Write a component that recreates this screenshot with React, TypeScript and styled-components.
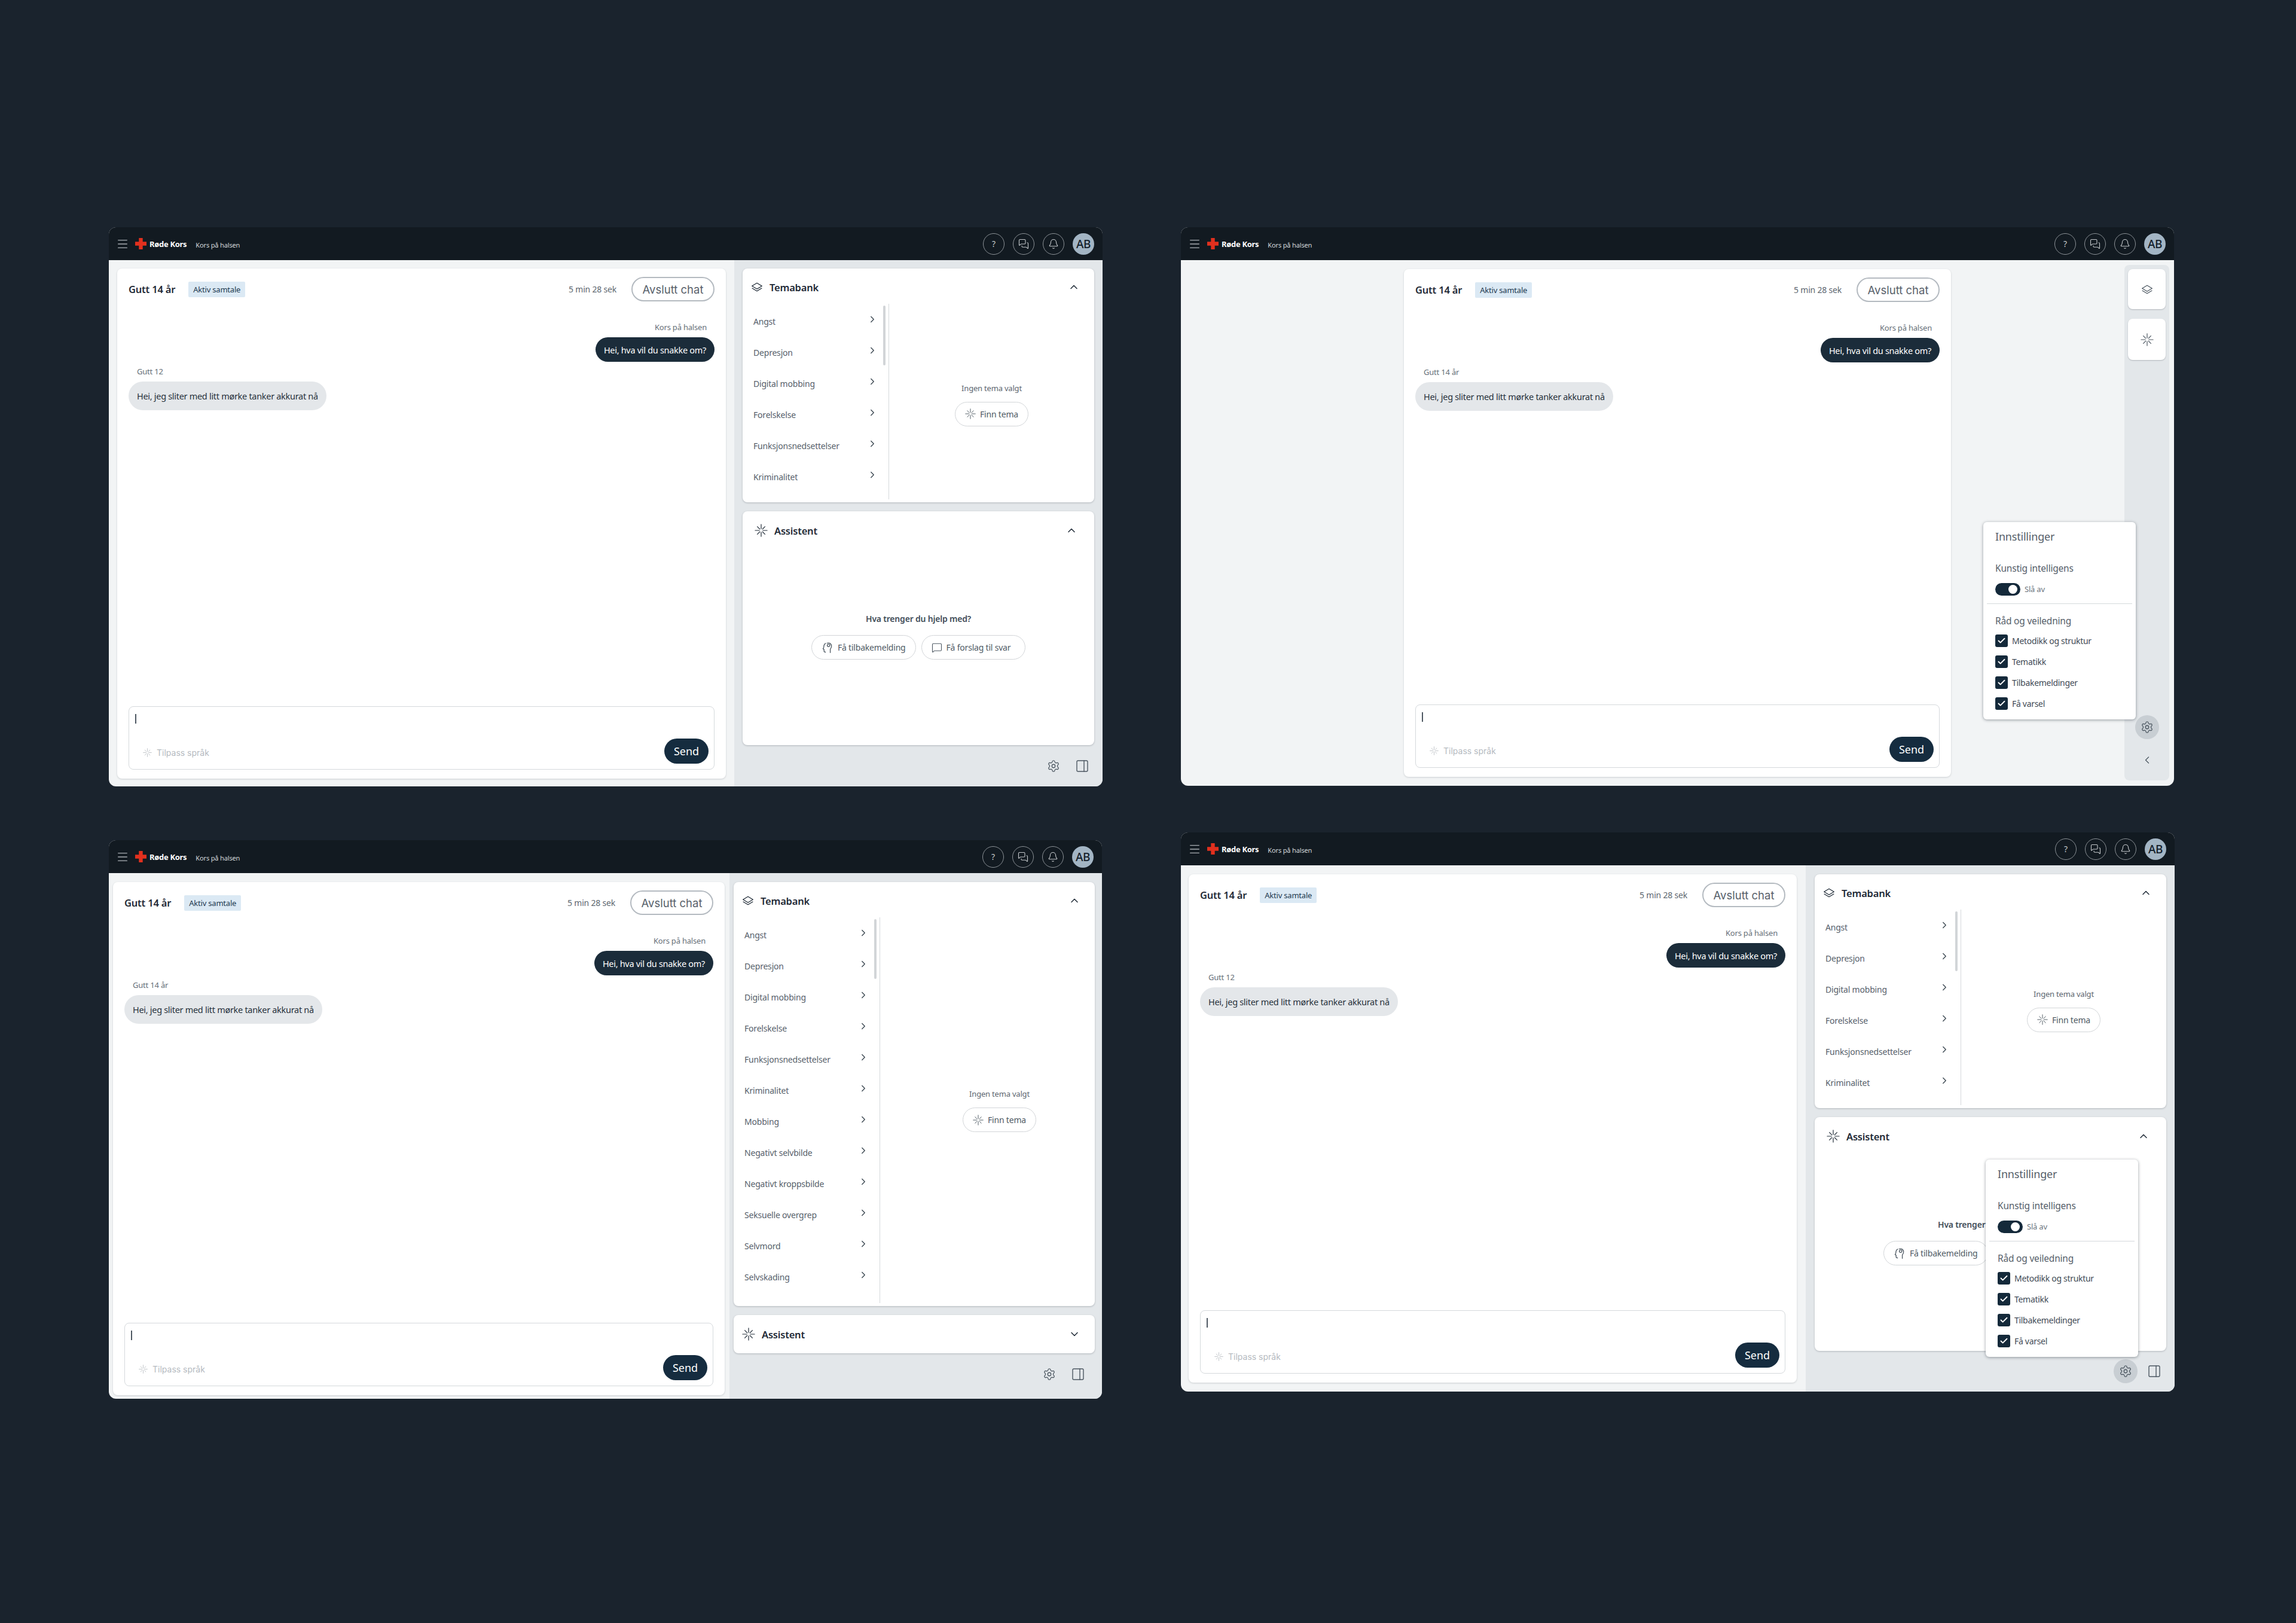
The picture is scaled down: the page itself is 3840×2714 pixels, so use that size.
import styled, { createGlobalStyle } from "styled-components";
import {
  Bell,
  Check,
  ChevronDown,
  ChevronLeft,
  ChevronRight,
  ChevronUp,
  Menu,
  MessageSquare,
  MessagesSquare,
  PanelRight,
  Settings,
} from "lucide-react";

const FONT = `"Noto Sans", "Open Sans", sans-serif`;

const TOPICS = [
  "Angst",
  "Depresjon",
  "Digital mobbing",
  "Forelskelse",
  "Funksjonsnedsettelser",
  "Kriminalitet",
  "Mobbing",
  "Negativt selvbilde",
  "Negativt kroppsbilde",
  "Seksuelle overgrep",
  "Selvmord",
  "Selvskading",
];

const SETTINGS = ["Metodikk og struktur", "Tematikk", "Tilbakemeldinger", "Få varsel"];

const LayersIcon = ({ size = 20 }: { size?: number }) => (
  <svg width={size} height={size} viewBox="0 0 24 24" fill="none" stroke="currentColor" strokeWidth="1.5" strokeLinejoin="round">
    <path d="M12 4 22 10 12 16 2 10Z" />
    <path d="M2 14 12 20 22 14" />
  </svg>
);

const BurstIcon = ({ size = 22 }: { size?: number }) => (
  <svg width={size} height={size} viewBox="0 0 24 24" fill="none" stroke="currentColor" strokeWidth="1.3" strokeLinecap="round">
    <path d="M12 1v8M12 15v8M1 12h8M15 12h8M5 5l4.500 4.500M14.500 14.500 19 19M19 5l-4.500 4.500M9.500 14.500 5 19" />
  </svg>
);

const HeadIcon = () => (
  <svg width="20" height="20" viewBox="0 0 24 24" fill="none" stroke="currentColor" strokeWidth="1.6" strokeLinecap="round" strokeLinejoin="round">
    <path d="M8 3.500C5.500 5 4.500 8 4.500 11L3 14.500l2 1V19c0 1 1 2 3 2" />
    <path d="M11 3c4-1.500 9 .5 9 6 0 3-1 4.500-2.500 6v7" />
    <circle cx="14" cy="7.500" r="2.500" />
  </svg>
);

const CrossLogo = () => (
  <svg width="19" height="19" viewBox="0 0 19 19">
    <path fill="#e1301e" d="M6.300 0h6.400v6.300H19v6.400h-6.300V19H6.300v-6.300H0V6.300h6.300z" />
  </svg>
);

const GlobalStyle = createGlobalStyle`
  html, body {
    margin: 0;
    background: #1a232d;
  }

  * {
    box-sizing: border-box;
  }

  #root {
    width: 3840px;
    height: 2714px;
    overflow: hidden;
  }
`;

const Canvas = styled.div`
  display: grid;
  grid-template-columns: 1662px 1662px;
  column-gap: 131px;
  row-gap: 76px;
  align-content: start;
  align-items: start;
  padding: 380px 0 0 182px;
  font-family: ${FONT};
  background: #1a232d;
  height: 100%;
`;

const Window = styled.section<{ $height: number; $shift?: number; $trim?: number }>`
  position: relative;
  display: flex;
  flex-direction: column;
  height: ${(p) => p.$height}px;
  margin-top: ${(p) => p.$shift ?? 0}px;
  margin-right: ${(p) => p.$trim ?? 0}px;
  border-radius: 12px;
  overflow: hidden;
  background: #f2f4f5;
`;

const TopBar = styled.header`
  flex: 0 0 55px;
  display: flex;
  align-items: center;
  padding: 0 14px 0 12px;
  background: #121a21;
  color: #fff;
`;

const MenuButton = styled.span`
  display: flex;
  color: #a9aeb3;
  margin-right: 10px;
`;

const Brand = styled.span`
  margin-left: 5px;
  font-size: 13px;
  font-weight: 700;
  letter-spacing: -0.3px;
`;

const Product = styled.span`
  margin-left: 15px;
  padding-top: 3px;
  font-size: 11px;
  color: #d5d9dc;
  letter-spacing: -0.15px;
`;

const TopActions = styled.div`
  margin-left: auto;
  display: flex;
  gap: 14px;
`;

const RoundAction = styled.span`
  width: 36px;
  height: 36px;
  display: flex;
  align-items: center;
  justify-content: center;
  border: 1px solid #8d9398;
  border-radius: 50%;
  color: #c4c8cb;
  font-size: 14px;
`;

const Avatar = styled.span`
  width: 36px;
  height: 36px;
  display: flex;
  align-items: center;
  justify-content: center;
  border-radius: 50%;
  background: #a3b5c4;
  color: #14202a;
  font-size: 19px;
  font-weight: 500;
  letter-spacing: -0.5px;
`;

const Body = styled.div`
  position: relative;
  flex: 1;
  min-height: 0;
  display: flex;
`;

const ChatArea = styled.div<{ $width: number; $pad: string }>`
  flex: 0 0 ${(p) => p.$width}px;
  display: flex;
  padding: ${(p) => p.$pad};
`;

const ChatCard = styled.main`
  flex: 1;
  display: flex;
  flex-direction: column;
  padding: 14px 19px 15px 19px;
  background: #fff;
  border-radius: 8px;
  box-shadow: 0 1px 3px rgba(30, 40, 50, 0.18);
`;

const ChatHeader = styled.div`
  display: flex;
  align-items: center;
  height: 41px;
`;

const ChatTitle = styled.h2`
  margin: 0;
  font-size: 16.500px;
  font-weight: 600;
  letter-spacing: -0.2px;
  color: #1f2a36;
`;

const StatusBadge = styled.span`
  margin-left: 22px;
  padding: 4px 8px;
  background: #dbe9f4;
  border-radius: 2px;
  font-size: 13px;
  letter-spacing: -0.2px;
  color: #1e3a50;
`;

const Elapsed = styled.span`
  margin-left: auto;
  margin-right: 25px;
  font-size: 14px;
  letter-spacing: -0.2px;
  color: #5d666f;
`;

const EndButton = styled.button`
  width: 139px;
  height: 41px;
  padding: 0;
  background: #fff;
  border: 2px solid #b4bac0;
  border-radius: 21px;
  font-family: "Inter", sans-serif;
  font-size: 18.500px;
  color: #59626b;
`;

const Thread = styled.div`
  flex: 1;
  display: flex;
  flex-direction: column;
  gap: 7px;
  padding-top: 34px;
`;

const Message = styled.div<{ $mine?: boolean }>`
  display: flex;
  flex-direction: column;
  gap: 8px;
  align-items: ${(p) => (p.$mine ? "flex-end" : "flex-start")};
`;

const Sender = styled.span<{ $mine?: boolean }>`
  padding: ${(p) => (p.$mine ? "0 13px 0 0" : "0 0 0 14px")};
  font-size: 13px;
  line-height: 18px;
  letter-spacing: -0.2px;
  color: #666f78;
`;

const Bubble = styled.p<{ $mine?: boolean }>`
  margin: 0;
  display: flex;
  align-items: center;
  height: ${(p) => (p.$mine ? 41 : 48)}px;
  padding: 0 14px;
  border-radius: 24px;
  font-size: 14.500px;
  letter-spacing: -0.3px;
  background: ${(p) => (p.$mine ? "#1b2c3a" : "#e4e7ea")};
  color: ${(p) => (p.$mine ? "#fff" : "#27313b")};
`;

const Composer = styled.div`
  height: 106px;
  display: flex;
  flex-direction: column;
  justify-content: space-between;
  padding: 12px 9px 9px 10px;
  border: 1px solid #d5d9dc;
  border-radius: 8px;
`;

const Caret = styled.span`
  width: 2px;
  height: 16px;
  background: #4e5862;
`;

const ComposerRow = styled.div`
  display: flex;
  align-items: center;
  justify-content: space-between;
`;

const ToneHint = styled.span`
  display: flex;
  align-items: center;
  gap: 8px;
  padding: 4px 0 0 13px;
  font-family: "Inter", sans-serif;
  font-size: 14px;
  color: #b5babf;
`;

const SendButton = styled.button`
  width: 74px;
  height: 42px;
  padding: 0;
  border: 0;
  border-radius: 21px;
  background: #152c3f;
  color: #fff;
  font-family: ${FONT};
  font-size: 18px;
`;

const SidePanel = styled.aside<{ $pad: string }>`
  flex: 1;
  display: flex;
  flex-direction: column;
  gap: 15px;
  padding: ${(p) => p.$pad};
  background: #e3e7ea;
`;

const Card = styled.section<{ $height: number }>`
  flex: 0 0 ${(p) => p.$height}px;
  display: flex;
  flex-direction: column;
  background: #fff;
  border-radius: 8px;
  box-shadow: 0 1px 3px rgba(30, 40, 50, 0.25);
`;

const CardHeader = styled.div<{ $height?: number; $start?: number; $end?: number }>`
  flex: 0 0 ${(p) => p.$height ?? 59}px;
  display: flex;
  align-items: center;
  gap: 11px;
  padding: 0 ${(p) => p.$end ?? 24}px 0 ${(p) => p.$start ?? 14}px;
  color: #1f2a36;

  > svg:last-child {
    margin-left: auto;
  }
`;

const ThemeHeader = styled(CardHeader)`
  padding-top: 3px;
`;

const CardTitle = styled.h3`
  margin: 0;
  font-size: 16.500px;
  font-weight: 600;
  letter-spacing: -0.2px;
`;

const ThemeBody = styled.div`
  flex: 1;
  min-height: 0;
  display: flex;
  padding-bottom: 5px;
`;

const TopicList = styled.ul`
  position: relative;
  flex: 0 0 245px;
  margin: 0;
  padding: 3px 0 0;
  list-style: none;
  overflow: hidden;
  border-right: 1px solid #d5d9dc;
`;

const TopicRow = styled.li`
  height: 52px;
  display: flex;
  align-items: center;
  justify-content: space-between;
  padding: 0 12px 0 18px;
  margin-right: 6px;
  font-size: 14px;
  letter-spacing: -0.2px;
  color: #56606a;

  svg {
    margin-top: -6px;
    color: #3a4650;
  }
`;

const ScrollThumb = styled.span`
  position: absolute;
  top: 3px;
  right: 5px;
  width: 4px;
  height: 100px;
  border-radius: 2px;
  background: #d2d5d8;
`;

const EmptyTheme = styled.div<{ $expanded?: boolean }>`
  flex: 1;
  display: flex;
  flex-direction: column;
  align-items: center;
  justify-content: center;
  gap: 14px;
  padding: ${(p) => (p.$expanded ? "0 0 0 40px" : "9px 0 0")};
`;

const Hint = styled.p`
  margin: 0;
  font-size: 13px;
  letter-spacing: -0.2px;
  color: #5d666f;
`;

const Pill = styled.button`
  height: 41px;
  display: flex;
  align-items: center;
  gap: 7px;
  padding: 0 16px;
  background: #fff;
  border: 1px solid #d2d5d8;
  border-radius: 21px;
  font-family: ${FONT};
  font-size: 14px;
  letter-spacing: -0.2px;
  color: #4f5a64;
`;

const AssistantBody = styled.div`
  flex: 1;
  display: flex;
  flex-direction: column;
  align-items: center;
  padding-top: 106px;
`;

const AssistantPrompt = styled.p`
  margin: 0 0 18px;
  font-size: 14px;
  font-weight: 600;
  letter-spacing: -0.2px;
  color: #424d58;
`;

const PillRow = styled.div`
  display: grid;
  grid-template-columns: 1fr 1fr;
  gap: 9px;
`;

const PanelFooter = styled.div<{ $inset?: number }>`
  flex: 1;
  display: flex;
  align-items: center;
  justify-content: flex-end;
  gap: 8px;
  margin-top: -15px;
  padding: 0 ${(p) => p.$inset ?? 0}px ${(p) => (p.$inset ? 6 : 0)}px 0;
`;

const IconButton = styled.span<{ $active?: boolean }>`
  width: 40px;
  height: 40px;
  display: flex;
  align-items: center;
  justify-content: center;
  border-radius: 50%;
  color: #4c5761;
  background: ${(p) => (p.$active ? "#c8ced3" : "transparent")};
`;

const WideBody = styled(Body)`
  padding: 15px 8px 9px 373px;
`;

const WideCard = styled(ChatCard)`
  flex: 0 0 915px;
  margin-bottom: 6px;
`;

const Rail = styled.nav`
  width: 75px;
  margin-top: -7px;
  margin-left: auto;
  display: flex;
  flex-direction: column;
  align-items: center;
  padding: 7px 0 24px;
  background: #e3e7ea;
  border-radius: 8px;
`;

const RailTab = styled.span<{ $tall?: boolean }>`
  width: 63px;
  height: ${(p) => (p.$tall ? 69 : 67)}px;
  margin-bottom: 16px;
  display: flex;
  align-items: center;
  justify-content: center;
  background: #fff;
  border-radius: 8px;
  color: #4c5761;
  box-shadow: 0 1px 2px rgba(30, 40, 50, 0.25);
`;

const RailFoot = styled.div`
  margin-top: auto;
  display: flex;
  flex-direction: column;
  align-items: center;
  gap: 25px;
  color: #4c5761;
`;

const Popover = styled.div<{ $right: number; $bottom: number }>`
  position: absolute;
  right: ${(p) => p.$right}px;
  bottom: ${(p) => p.$bottom}px;
  width: 255px;
  height: 330px;
  padding-top: 12px;
  background: #fff;
  border-radius: 6px;
  box-shadow: 0 1px 5px rgba(30, 40, 50, 0.45);
  color: #56606a;
`;

const PopoverTitle = styled.h4`
  margin: 0 20px;
  font-size: 18px;
  line-height: 24px;
  font-weight: 400;
  letter-spacing: -0.2px;
`;

const PopoverLabel = styled.h5<{ $gap: number }>`
  margin: ${(p) => p.$gap}px 20px 0;
  font-size: 15.500px;
  line-height: 22px;
  font-weight: 400;
  letter-spacing: -0.2px;
`;

const ToggleRow = styled.div`
  margin: 14px 20px;
  height: 20px;
  display: flex;
  align-items: center;
  gap: 7px;
  font-size: 13px;
  letter-spacing: -0.2px;
  color: #6d7680;
`;

const Toggle = styled.span`
  position: relative;
  width: 42px;
  height: 21px;
  border-radius: 11px;
  background: #14293a;

  &::after {
    content: "";
    position: absolute;
    top: 3px;
    right: 5px;
    width: 15px;
    height: 15px;
    border-radius: 50%;
    background: #fff;
  }
`;

const PopoverRule = styled.hr`
  margin: 0 6px;
  border: 0;
  border-top: 1px solid #d5d9dc;
`;

const CheckList = styled.div`
  display: flex;
  flex-direction: column;
  gap: 14px;
  margin: 12px 20px 0;
`;

const CheckRow = styled.label`
  height: 21px;
  display: flex;
  align-items: center;
  gap: 7px;
  font-size: 14px;
  letter-spacing: -0.3px;
  color: #3f4a55;
`;

const CheckBox = styled.span`
  width: 21px;
  height: 21px;
  display: flex;
  align-items: center;
  justify-content: center;
  border-radius: 3px;
  background: #14293a;
  color: #fff;
`;

const AppHeader = () => (
  <TopBar>
    <MenuButton>
      <Menu size={22} strokeWidth={1.4} />
    </MenuButton>
    <CrossLogo />
    <Brand>Røde Kors</Brand>
    <Product>Kors på halsen</Product>
    <TopActions>
      <RoundAction>?</RoundAction>
      <RoundAction>
        <MessagesSquare size={18} strokeWidth={1.5} />
      </RoundAction>
      <RoundAction>
        <Bell size={18} strokeWidth={1.5} />
      </RoundAction>
      <Avatar>AB</Avatar>
    </TopActions>
  </TopBar>
);

const Chat = ({ visitor }: { visitor: string }) => (
  <>
    <ChatHeader>
      <ChatTitle>Gutt 14 år</ChatTitle>
      <StatusBadge>Aktiv samtale</StatusBadge>
      <Elapsed>5 min 28 sek</Elapsed>
      <EndButton>Avslutt chat</EndButton>
    </ChatHeader>
    <Thread>
      <Message $mine>
        <Sender $mine>Kors på halsen</Sender>
        <Bubble $mine>Hei, hva vil du snakke om?</Bubble>
      </Message>
      <Message>
        <Sender>{visitor}</Sender>
        <Bubble>Hei, jeg sliter med litt mørke tanker akkurat nå</Bubble>
      </Message>
    </Thread>
    <Composer>
      <Caret />
      <ComposerRow>
        <ToneHint>
          <BurstIcon size={15} />
          Tilpass språk
        </ToneHint>
        <SendButton>Send</SendButton>
      </ComposerRow>
    </Composer>
  </>
);

const ThemeCard = ({ expanded }: { expanded?: boolean }) => (
  <Card $height={expanded ? 709 : 391}>
    <ThemeHeader>
      <LayersIcon />
      <CardTitle>Temabank</CardTitle>
      <ChevronUp size={20} strokeWidth={1.8} />
    </ThemeHeader>
    <ThemeBody>
      <TopicList>
        {TOPICS.slice(0, expanded ? 12 : 6).map((topic) => (
          <TopicRow key={topic}>
            {topic}
            <ChevronRight size={18} strokeWidth={1.8} />
          </TopicRow>
        ))}
        <ScrollThumb />
      </TopicList>
      <EmptyTheme $expanded={expanded}>
        <Hint>Ingen tema valgt</Hint>
        <Pill>
          <BurstIcon size={18} />
          Finn tema
        </Pill>
      </EmptyTheme>
    </ThemeBody>
  </Card>
);

const AssistantCard = () => (
  <Card $height={391}>
    <CardHeader $height={64} $start={20} $end={28}>
      <BurstIcon />
      <CardTitle>Assistent</CardTitle>
      <ChevronUp size={20} strokeWidth={1.8} />
    </CardHeader>
    <AssistantBody>
      <AssistantPrompt>Hva trenger du hjelp med?</AssistantPrompt>
      <PillRow>
        <Pill>
          <HeadIcon />
          Få tilbakemelding
        </Pill>
        <Pill>
          <MessageSquare size={18} strokeWidth={1.5} />
          Få forslag til svar
        </Pill>
      </PillRow>
    </AssistantBody>
  </Card>
);

const CollapsedAssistant = () => (
  <Card $height={64}>
    <CardHeader $height={64}>
      <BurstIcon />
      <CardTitle>Assistent</CardTitle>
      <ChevronDown size={20} strokeWidth={1.8} />
    </CardHeader>
  </Card>
);

const Footer = ({ active, inset }: { active?: boolean; inset?: number }) => (
  <PanelFooter $inset={inset}>
    <IconButton $active={active}>
      <Settings size={22} strokeWidth={1.4} />
    </IconButton>
    <IconButton>
      <PanelRight size={24} strokeWidth={1.4} />
    </IconButton>
  </PanelFooter>
);

const SettingsPopover = ({ right, bottom }: { right: number; bottom: number }) => (
  <Popover $right={right} $bottom={bottom}>
    <PopoverTitle>Innstillinger</PopoverTitle>
    <PopoverLabel $gap={30}>Kunstig intelligens</PopoverLabel>
    <ToggleRow>
      <Toggle />
      Slå av
    </ToggleRow>
    <PopoverRule />
    <PopoverLabel $gap={17}>Råd og veiledning</PopoverLabel>
    <CheckList>
      {SETTINGS.map((label) => (
        <CheckRow key={label}>
          <CheckBox>
            <Check size={15} strokeWidth={3} />
          </CheckBox>
          {label}
        </CheckRow>
      ))}
    </CheckList>
  </Popover>
);

export default function App() {
  return (
    <>
      <GlobalStyle />
      <Canvas>
        <Window $height={935}>
          <AppHeader />
          <Body>
            <ChatArea $width={1046} $pad="14px 14px 13px 14px">
              <ChatCard>
                <Chat visitor="Gutt 12" />
              </ChatCard>
            </ChatArea>
            <SidePanel $pad="14px 14px 0">
              <ThemeCard />
              <AssistantCard />
              <Footer />
            </SidePanel>
          </Body>
        </Window>

        <Window $height={934} $trim={1}>
          <AppHeader />
          <WideBody>
            <WideCard>
              <Chat visitor="Gutt 14 år" />
            </WideCard>
            <Rail>
              <RailTab>
                <LayersIcon />
              </RailTab>
              <RailTab $tall>
                <BurstIcon />
              </RailTab>
              <RailFoot>
                <IconButton $active>
                  <Settings size={22} strokeWidth={1.4} />
                </IconButton>
                <ChevronLeft size={20} strokeWidth={1.5} />
              </RailFoot>
            </Rail>
            <SettingsPopover right={64} bottom={111} />
          </WideBody>
        </Window>

        <Window $height={934} $shift={14} $trim={1}>
          <AppHeader />
          <Body>
            <ChatArea $width={1038} $pad="15px 8px 6px 7px">
              <ChatCard>
                <Chat visitor="Gutt 14 år" />
              </ChatCard>
            </ChatArea>
            <SidePanel $pad="15px 12px 0 7px">
              <ThemeCard expanded />
              <CollapsedAssistant />
              <Footer inset={8} />
            </SidePanel>
          </Body>
        </Window>

        <Window $height={935} $shift={1}>
          <AppHeader />
          <Body>
            <ChatArea $width={1045} $pad="15px 15px 15px 13px">
              <ChatCard>
                <Chat visitor="Gutt 12" />
              </ChatCard>
            </ChatArea>
            <SidePanel $pad="15px 14px 0 15px">
              <ThemeCard />
              <AssistantCard />
              <Footer active />
            </SidePanel>
            <SettingsPopover right={61} bottom={58} />
          </Body>
        </Window>
      </Canvas>
    </>
  );
}
